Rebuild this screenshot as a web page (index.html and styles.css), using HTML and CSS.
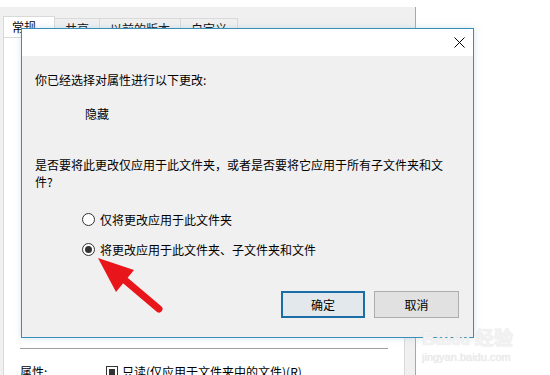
FILE: index.html
```html
<!DOCTYPE html>
<html lang="zh-CN">
<head>
  <meta charset="UTF-8">
  <meta name="viewport" content="width=device-width, initial-scale=1.0">
  <title>确认属性更改</title>
  <link rel="stylesheet" href="styles.css">
</head>
<body>
  <div class="props-window">
    <div class="tabs">
      <div class="tab active">常规</div>
      <div class="tab">共享</div>
      <div class="tab">以前的版本</div>
      <div class="tab">自定义</div>
    </div>
    <div class="pane">
      <div class="pane-hidden"></div>
      <div class="separator"></div>
      <div class="attr-row">
        <span class="attr-label">属性:</span>
        <span class="checkbox"><span class="checkbox-fill"></span></span>
        <span>只读(仅应用于文件夹中的文件)(R)</span>
      </div>
    </div>
  </div>

  <div class="dialog">
    <div class="titlebar">
      <svg class="close-icon" width="11" height="11" viewBox="0 0 11 11">
        <path d="M0.5 0.5 L10.5 10.5 M10.5 0.5 L0.5 10.5" stroke="#000" stroke-width="1" fill="none"/>
      </svg>
    </div>
    <div class="dialog-body">
      <p class="intro">你已经选择对属性进行以下更改:</p>
      <p class="change">隐藏</p>
      <p class="question">是否要将此更改仅应用于此文件夹，或者是否要将它应用于所有子文件夹和文件?</p>
      <div class="options">
        <label class="option"><span class="radio"></span>仅将更改应用于此文件夹</label>
        <label class="option"><span class="radio checked"></span>将更改应用于此文件夹、子文件夹和文件</label>
      </div>
      <div class="buttons">
        <button class="btn default">确定</button>
        <button class="btn">取消</button>
      </div>
    </div>
  </div>

  <svg class="arrow" width="550" height="375" viewBox="0 0 550 375">
    <line x1="159" y1="309" x2="120" y2="276" stroke="#e8161b" stroke-width="7" stroke-linecap="round"/>
    <polygon points="98,258 134,270 116,292" fill="#e8161b"/>
  </svg>

  <div class="watermark">
    <div class="wm-logo">Bai<span class="wm-paw">du</span> 经验</div>
    <div class="wm-url">jingyan.baidu.com</div>
  </div>
</body>
</html>
```

FILE: styles.css
```css
* {
  box-sizing: border-box;
}
body {
  margin: 0;
  width: 550px;
  height: 375px;
  overflow: hidden;
  background: #fff;
  font-family: "Noto Sans CJK SC", "Microsoft YaHei", sans-serif;
  font-size: 12px;
  color: #000;
  position: relative;
}
.props-window {
  margin-top: 7px;
  width: 416px;
  height: 380px;
  background: #f0f0f0;
  border-right: 1px solid #a8a8a8;
}
.tabs {
  display: flex;
  align-items: flex-end;
  padding: 9px 0 0 3px;
  height: 30px;
}
.tab {
  height: 19px;
  padding: 0 10px;
  line-height: 19px;
  border: 1px solid #d9d9d9;
  border-bottom: none;
  margin-left: -1px;
  background: #f0f0f0;
  color: #000;
}
.tab.active {
  height: 21px;
  margin-left: 0;
  width: 52px;
  padding: 0 8px;
  background: #fff;
}
.pane {
  margin-left: 3px;
  width: 402px;
  height: 360px;
  background: #fff;
  border: 1px solid #d9d9d9;
}
.pane-hidden {
  height: 310px;
}
.separator {
  margin-left: 16px;
  width: 368px;
  height: 1px;
  background: #a0a0a0;
}
.attr-row {
  display: flex;
  align-items: center;
  margin-top: 15px;
  padding-left: 16px;
  line-height: 16px;
}
.attr-label {
  width: 86px;
}
.checkbox {
  width: 12px;
  height: 12px;
  border: 1px solid #333;
  display: flex;
  align-items: center;
  justify-content: center;
  margin-right: 4px;
}
.checkbox-fill {
  width: 6px;
  height: 6px;
  background: #333;
}

/* the confirm dialog sits over the properties window */
.dialog {
  position: absolute;
  left: 21px;
  top: 28px;
  width: 453px;
  height: 310px;
  border: 1px solid #3a8db4;
  background: #f0f0f0;
  box-shadow: 0 0 6px rgba(160, 200, 220, 0.5);
}
.titlebar {
  height: 27px;
  background: #fff;
  display: flex;
  justify-content: flex-end;
  align-items: center;
  padding-right: 8px;
}
.dialog-body {
  padding: 15px 14px 0 13px;
}
.dialog-body p {
  margin: 0;
}
.intro {
  line-height: 18px;
}
.change {
  line-height: 18px;
  margin-top: 16px !important;
  padding-left: 50px;
}
.question {
  width: 414px;
  line-height: 17px;
  margin-top: 33px !important;
}
.options {
  display: flex;
  flex-direction: column;
  gap: 12px;
  margin-top: 20px;
  padding-left: 47px;
}
.option {
  display: flex;
  align-items: center;
  height: 18px;
}
.radio {
  width: 13px;
  height: 13px;
  border: 1px solid #333;
  border-radius: 50%;
  background: #fff;
  margin-right: 5px;
  display: flex;
  align-items: center;
  justify-content: center;
}
.radio.checked::after {
  content: "";
  width: 7px;
  height: 7px;
  border-radius: 50%;
  background: #333;
}
.buttons {
  display: flex;
  justify-content: flex-end;
  gap: 9px;
  margin-top: 33px;
}
.btn {
  width: 85px;
  height: 27px;
  font-family: inherit;
  font-size: 12px;
  background: #e1e1e1;
  border: 1px solid #adadad;
  color: #000;
  padding: 0;
}
.btn.default {
  border: 2px solid #1b6ea5;
  background: #e3e8ec;
  width: 84px;
}

.arrow {
  position: absolute;
  left: 0;
  top: 0;
  pointer-events: none;
}

.watermark {
  position: absolute;
  left: 422px;
  top: 328px;
  color: #f2f2f2;
  text-shadow: 0 0 1px #dcdcdc;
  font-family: "Liberation Sans", Arial, sans-serif;
}
.wm-logo {
  font-size: 19px;
  font-weight: bold;
  line-height: 22px;
}
.wm-paw {
  font-size: 15px;
}
.wm-url {
  font-size: 11px;
  line-height: 13px;
  color: #ececec;
}
```
